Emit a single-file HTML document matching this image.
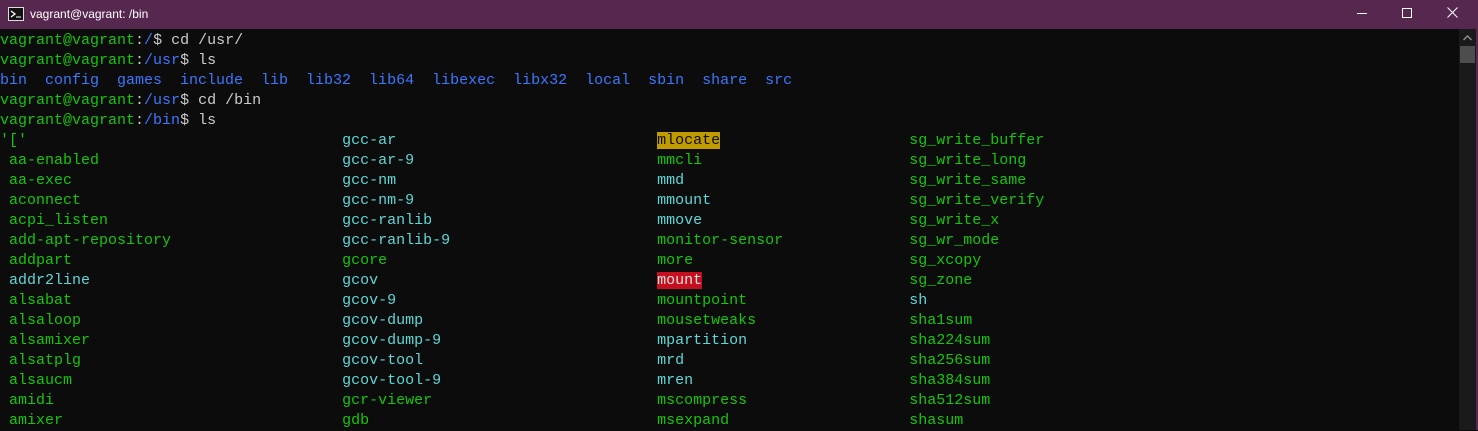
<!DOCTYPE html>
<html><head><style>
body{margin:0;width:1478px;height:430px;background:#0c0c0c;overflow:hidden;position:relative;font-family:"Liberation Mono",monospace}
#tb{position:absolute;left:0;top:0;width:1478px;height:29px;background:#57284f}
#tt{position:absolute;left:30px;top:7px;color:#fff;font:12px "Liberation Sans",sans-serif}
pre{margin:0;position:absolute;left:0;top:31px;font-size:15px;line-height:20px;color:#cccccc;font-family:"Liberation Mono",monospace}
.g{color:#16c60c}.b{color:#3b78ff}.c{color:#61d6d6}
.y{background:#c19c00;color:#0c0c0c}.r{background:#c50f1f;color:#e0e0e0}
#sb{position:absolute;left:1459px;top:29px;width:17px;height:401px;background:#1a1a1a}
#th{position:absolute;left:1460px;top:46px;width:15px;height:17px;background:#4d4d4d}
#rb{position:absolute;left:1476px;top:0;width:2px;height:430px;background:#57284f}
</style></head><body>
<div id="tb"></div>
<svg style="position:absolute;left:8px;top:7px" width="16" height="14" viewBox="0 0 16 14"><rect x="0.5" y="0.5" width="15" height="13" fill="#111" stroke="#ddd"/><path d="M3 4l4 3-4 3" stroke="#fff" fill="none" stroke-width="1.3"/><path d="M8 10h5" stroke="#fff"/></svg>
<div id="tt">vagrant@vagrant: /bin</div>
<div style="position:absolute;left:1357px;top:13px;width:10px;height:1px;background:#fff"></div>
<div style="position:absolute;left:1402px;top:8px;width:8px;height:8px;border:1px solid #fff"></div>
<svg style="position:absolute;left:1447px;top:7px" width="11" height="11"><path d="M0.5 0.5L10.5 10.5M10.5 0.5L0.5 10.5" stroke="#fff"/></svg>
<div id="sb"></div><div id="th"></div>
<svg style="position:absolute;left:1463px;top:35px" width="9" height="6"><path d="M0.5 5L4.5 1L8.5 5" stroke="#8a8a8a" stroke-width="1.5" fill="none"/></svg>
<div id="rb"></div>
<pre><span class="g">vagrant@vagrant</span>:<span class="b">/</span>$ cd /usr/
<span class="g">vagrant@vagrant</span>:<span class="b">/usr</span>$ ls
<span class="b">bin  config  games  include  lib  lib32  lib64  libexec  libx32  local  sbin  share  src</span>
<span class="g">vagrant@vagrant</span>:<span class="b">/usr</span>$ cd /bin
<span class="g">vagrant@vagrant</span>:<span class="b">/bin</span>$ ls
<span class="g">'['</span>                                   <span class="c">gcc-ar</span>                             <span class="y">mlocate</span>                     <span class="g">sg_write_buffer</span>
 <span class="g">aa-enabled</span>                           <span class="c">gcc-ar-9</span>                           <span class="g">mmcli</span>                       <span class="g">sg_write_long</span>
 <span class="g">aa-exec</span>                              <span class="c">gcc-nm</span>                             <span class="c">mmd</span>                         <span class="g">sg_write_same</span>
 <span class="g">aconnect</span>                             <span class="c">gcc-nm-9</span>                           <span class="c">mmount</span>                      <span class="g">sg_write_verify</span>
 <span class="g">acpi_listen</span>                          <span class="c">gcc-ranlib</span>                         <span class="c">mmove</span>                       <span class="g">sg_write_x</span>
 <span class="g">add-apt-repository</span>                   <span class="c">gcc-ranlib-9</span>                       <span class="g">monitor-sensor</span>              <span class="g">sg_wr_mode</span>
 <span class="g">addpart</span>                              <span class="g">gcore</span>                              <span class="g">more</span>                        <span class="g">sg_xcopy</span>
 <span class="c">addr2line</span>                            <span class="c">gcov</span>                               <span class="r">mount</span>                       <span class="g">sg_zone</span>
 <span class="g">alsabat</span>                              <span class="c">gcov-9</span>                             <span class="g">mountpoint</span>                  <span class="c">sh</span>
 <span class="g">alsaloop</span>                             <span class="c">gcov-dump</span>                          <span class="g">mousetweaks</span>                 <span class="g">sha1sum</span>
 <span class="g">alsamixer</span>                            <span class="c">gcov-dump-9</span>                        <span class="c">mpartition</span>                  <span class="g">sha224sum</span>
 <span class="g">alsatplg</span>                             <span class="c">gcov-tool</span>                          <span class="c">mrd</span>                         <span class="g">sha256sum</span>
 <span class="g">alsaucm</span>                              <span class="c">gcov-tool-9</span>                        <span class="c">mren</span>                        <span class="g">sha384sum</span>
 <span class="g">amidi</span>                                <span class="g">gcr-viewer</span>                         <span class="g">mscompress</span>                  <span class="g">sha512sum</span>
 <span class="g">amixer</span>                               <span class="g">gdb</span>                                <span class="g">msexpand</span>                    <span class="g">shasum</span>
</pre>
</body></html>
